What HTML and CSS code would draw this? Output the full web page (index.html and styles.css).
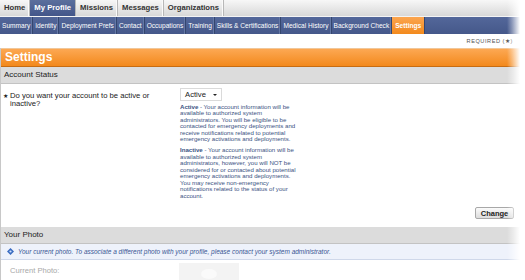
FILE: index.html
```html
<!DOCTYPE html>
<html>
<head>
<meta charset="utf-8">
<link rel="stylesheet" href="styles.css">
</head>
<body>
<div class="page">
  <nav class="topnav">
    <span class="tab">Home</span>
    <span class="tab active">My Profile</span>
    <span class="tab">Missions</span>
    <span class="tab">Messages</span>
    <span class="tab">Organizations</span>
  </nav>
  <nav class="subnav">
    <span class="sub">Summary</span>
    <span class="sub">Identity</span>
    <span class="sub">Deployment Prefs</span>
    <span class="sub">Contact</span>
    <span class="sub">Occupations</span>
    <span class="sub">Training</span>
    <span class="sub">Skills &amp; Certifications</span>
    <span class="sub">Medical History</span>
    <span class="sub">Background Check</span>
    <span class="sub active">Settings</span>
  </nav>
  <div class="required">REQUIRED (★)</div>
  <main class="panel">
    <h1 class="title">Settings</h1>
    <div class="bar">Account Status</div>
    <div class="form-row">
      <div class="question"><span class="star">★</span><span>Do you want your account to be active or inactive?</span></div>
      <div class="answer">
        <div class="select"><span>Active</span><span class="caret"></span></div>
        <p class="desc"><b>Active</b> - Your account information will be available to authorized system administrators. You will be eligible to be contacted for emergency deployments and receive notifications related to potential emergency activations and deployments.</p>
        <p class="desc"><b>Inactive</b> - Your account information will be available to authorized system administrators, however, you will NOT be considered for or contacted about potential emergency activations and deployments. You may receive non-emergency notifications related to the status of your account.</p>
      </div>
    </div>
    <div class="actions"><button class="btn">Change</button></div>
    <div class="bar">Your Photo</div>
    <div class="info">
      <svg class="icon" width="7" height="7" viewBox="0 0 7 7"><path d="M3.5 0 L7 3.5 L3.5 7 L0 3.5 Z" fill="#3a6cc0"/><circle cx="3.5" cy="3.5" r="1.1" fill="#cfe0ff"/></svg>
      <span>Your current photo. To associate a different photo with your profile, please contact your system administrator.</span>
    </div>
    <div class="photo-row">
      <span class="photo-label">Current Photo:</span>
      <div class="photo"><div class="head"></div></div>
    </div>
  </main>
  <div class="fade"></div>
</div>
</body>
</html>
```
FILE: styles.css
```css
html, body {
  margin: 0;
  padding: 0;
  background: #fff;
  overflow: hidden;
}
body {
  font-family: "Liberation Sans", Arial, sans-serif;
  color: #222;
}
.page {
  width: 525px;
  height: 280px;
  position: relative;
  overflow: hidden;
}
.topnav {
  display: flex;
  height: 16px;
  background: linear-gradient(#f7f7f7, #d8d8d8);
  border-bottom: 1px solid #f4f4f4;
}
.tab {
  padding: 0 4px;
  font-weight: bold;
  font-size: 7.7px;
  line-height: 16px;
  color: #333;
  border-right: 1px solid #b8b8b8;
  box-shadow: inset -1px 0 #fafafa;
}
.tab.active {
  background: linear-gradient(#5b6f9d, #43568a);
  color: #fff;
  box-shadow: none;
}
.subnav {
  display: flex;
  height: 17px;
  background: linear-gradient(#53679a, #45588a);
}
.sub {
  padding: 0 2px;
  font-size: 6.6px;
  line-height: 17px;
  color: #fff;
  border-right: 1px solid #34466f;
  box-shadow: inset -1px 0 #6478a6;
}
.sub.active {
  background: linear-gradient(#fba54f, #f38a1d);
  font-weight: bold;
  box-shadow: none;
  padding: 0 3px;
}
.required {
  height: 14px;
  line-height: 14px;
  text-align: right;
  padding-right: 12px;
  font-size: 5.6px;
  letter-spacing: 0.55px;
  color: #555;
}
.panel {
  border-left: 1px solid #c8c8c8;
}
.title {
  margin: 0;
  height: 17px;
  line-height: 17px;
  padding-left: 4px;
  font-size: 12px;
  font-weight: bold;
  color: #fff;
  background: linear-gradient(#fca853, #f3891c);
  border-top: 1px solid #f0c79a;
  border-bottom: 1px solid #c76c12;
}
.bar {
  height: 16px;
  line-height: 16px;
  padding-left: 3px;
  font-size: 8px;
  color: #222;
  background: #dcdcdc;
  border-bottom: 1px solid #c3c3c3;
}
.form-row {
  display: grid;
  grid-template-columns: 177px 1fr;
  padding: 4px 11px 0 2px;
}
.question {
  display: flex;
  gap: 2px;
  width: 150px;
  margin-top: 3.5px;
  font-size: 7.7px;
  line-height: 8.7px;
  color: #222;
}
.star {
  font-size: 5.5px;
  flex: none;
}
.answer {
  display: flex;
  flex-direction: column;
  align-items: flex-start;
}
.select {
  width: 42px;
  height: 13px;
  box-sizing: border-box;
  border: 1px solid #dadada;
  background: #fff;
  display: flex;
  align-items: center;
  justify-content: space-between;
  padding: 0 4px 0 4px;
  font-size: 7.7px;
  color: #222;
}
.caret {
  width: 0;
  height: 0;
  border-left: 2px solid transparent;
  border-right: 2px solid transparent;
  border-top: 2px solid #222;
}
.desc {
  margin: 2.5px 0 1px;
  width: 121px;
  font-size: 6.1px;
  line-height: 6.5px;
  color: #3a5282;
}
.desc + .desc {
  margin-top: 3.5px;
}
.actions {
  display: flex;
  justify-content: flex-end;
  padding: 7px 11px 0 0;
}
.btn {
  height: 12px;
  width: 39px;
  padding: 0;
  font-family: "Liberation Sans", Arial, sans-serif;
  font-weight: bold;
  font-size: 7.5px;
  color: #222;
  background: linear-gradient(#fbfbfb, #dcdcdc);
  border: 1px solid #a8a8a8;
  border-radius: 2px;
}
.actions + .bar {
  margin-top: 8px;
}
.info {
  display: flex;
  align-items: center;
  gap: 4px;
  height: 15px;
  padding-left: 6px;
  background: #eef2fb;
  border-bottom: 1px solid #cfd8ea;
  font-size: 6.5px;
  font-style: italic;
  color: #3a5794;
}
.icon {
  flex: none;
}
.photo-row {
  display: grid;
  grid-template-columns: 169px 1fr;
  padding: 3px 0 0 9px;
}
.photo-label {
  margin-top: 3px;
  font-size: 7.6px;
  color: #a8a8a8;
}
.photo {
  width: 60px;
  height: 20px;
  background: #f3f3f3;
  display: flex;
  justify-content: center;
}
.head {
  width: 16px;
  height: 10px;
  margin-top: 6px;
  border-radius: 50%;
  background: #fafafa;
}
.fade {
  position: absolute;
  top: 0;
  right: 0;
  width: 18px;
  height: 100%;
  background: linear-gradient(to right, rgba(255,255,255,0) 0, rgba(255,255,255,0.35) 5px, #fff 13px);
}
```
